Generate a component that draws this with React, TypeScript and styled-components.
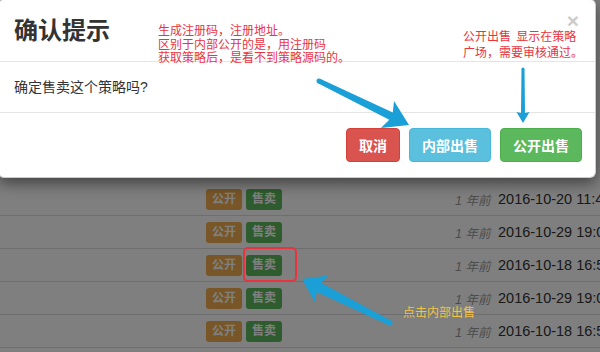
import React from 'react'
import styled, { createGlobalStyle } from 'styled-components'

const GlobalStyle = createGlobalStyle`
  html, body {
    margin: 0;
    padding: 0;
    width: 600px;
    height: 352px;
    overflow: hidden;
    background: #fff;
  }
  body {
    font-family: "Liberation Sans", "Noto Sans CJK SC", sans-serif;
    color: #333;
  }
`

const Screen = styled.div`
  position: relative;
  width: 600px;
  height: 352px;
  overflow: hidden;
`

const Table = styled.div`
  display: flex;
  flex-direction: column;
  padding-top: 183px;
`

const Row = styled.div`
  display: flex;
  align-items: center;
  height: 32px;
  border-bottom: 1px solid #ddd;
  padding-left: 206px;
  white-space: nowrap;
`

const Labels = styled.div`
  display: flex;
  flex-shrink: 0;
  gap: 4px;
  width: 249px;
`

const Label = styled.span<{ $tone: 'warning' | 'success' }>`
  display: inline-block;
  height: 21px;
  line-height: 21px;
  padding: 0 6px;
  border-radius: 3px;
  font-size: 12px;
  font-weight: bold;
  color: #fff;
  background: ${({ $tone }) => ($tone === 'warning' ? '#f0ad4e' : '#5cb85c')};
`

const Ago = styled.span`
  flex-shrink: 0;
  width: 43px;
  font-size: 12.5px;
  font-style: italic;
  color: #999;
`

const DateText = styled.span`
  flex-shrink: 0;
  font-size: 14.5px;
  color: #333;
`

const Backdrop = styled.div`
  position: absolute;
  inset: 0;
  background: rgba(0, 0, 0, 0.5);
`

const Modal = styled.div`
  position: absolute;
  top: -1px;
  left: -2px;
  width: 598px;
  background: #fff;
  border: 1px solid rgba(0, 0, 0, 0.2);
  border-radius: 6px;
  box-shadow: 0 5px 15px rgba(0, 0, 0, 0.5);
  box-sizing: border-box;
`

const ModalHeader = styled.div`
  display: flex;
  align-items: center;
  justify-content: space-between;
  height: 62px;
  padding: 0 15px;
  border-bottom: 1px solid #e5e5e5;
  box-sizing: border-box;
`

const Title = styled.h4`
  margin: 0;
  font-size: 24px;
  line-height: 32px;
  font-weight: bold;
  color: #333;
`

const Close = styled.span`
  align-self: flex-start;
  margin-top: 10px;
  margin-right: 1px;
  font-size: 21px;
  font-weight: bold;
  line-height: 21px;
  color: #000;
  opacity: 0.2;
`

const ModalBody = styled.div`
  padding: 15px;
  font-size: 14px;
  line-height: 20px;
  border-bottom: 1px solid #e5e5e5;
`

const ModalFooter = styled.div`
  display: flex;
  justify-content: flex-end;
  gap: 9px;
  padding: 15px 13px 15px 15px;
`

const tones = {
  danger: ['#d9534f', '#d43f3a'],
  info: ['#5bc0de', '#46b8da'],
  success: ['#5cb85c', '#4cae4c'],
}

const Button = styled.button<{ $tone: keyof typeof tones }>`
  height: 34px;
  padding: 0 12px;
  font-family: inherit;
  font-size: 14px;
  font-weight: bold;
  color: #fff;
  background: ${({ $tone }) => tones[$tone][0]};
  border: 1px solid ${({ $tone }) => tones[$tone][1]};
  border-radius: 4px;
`

const Note = styled.div<{ $x: number; $y: number; $color: string; $size: number; $lh: number }>`
  position: absolute;
  left: ${({ $x }) => $x}px;
  top: ${({ $y }) => $y}px;
  font-size: ${({ $size }) => $size}px;
  line-height: ${({ $lh }) => $lh}px;
  color: ${({ $color }) => $color};
  white-space: nowrap;
  word-spacing: 2px;
`

const HighlightBox = styled.div`
  position: absolute;
  left: 243px;
  top: 247px;
  width: 50px;
  height: 31px;
  border: 2px solid #e8343f;
  border-radius: 5px;
`

const Drawing = styled.svg`
  position: absolute;
  inset: 0;
  pointer-events: none;
`

type Pt = [number, number]

// tapered skitch-style arrow
function arrowPoints(tail: Pt, tip: Pt, tailW: number, neckW: number, headW: number, headLen: number, back: number) {
  const dx = tip[0] - tail[0]
  const dy = tip[1] - tail[1]
  const len = Math.hypot(dx, dy)
  const ux = dx / len
  const uy = dy / len
  const nx = -uy
  const ny = ux
  const neck: Pt = [tip[0] - ux * headLen, tip[1] - uy * headLen]
  const barb: Pt = [neck[0] - ux * back, neck[1] - uy * back]
  const p = (b: Pt, s: number): string => `${(b[0] + nx * s).toFixed(1)},${(b[1] + ny * s).toFixed(1)}`
  return [
    p(tail, tailW / 2),
    p(neck, neckW / 2),
    p(barb, headW / 2),
    `${tip[0]},${tip[1]}`,
    p(barb, -headW / 2),
    p(neck, -neckW / 2),
    p(tail, -tailW / 2),
  ].join(' ')
}

const arrows: { tail: Pt; tip: Pt; tw: number; nw: number; hw: number; hl: number; back: number }[] = [
  { tail: [319, 81], tip: [409, 125], tw: 5, nw: 8, hw: 30, hl: 20, back: 4 },
  { tail: [523, 69], tip: [523, 123], tw: 3, nw: 4, hw: 13, hl: 10, back: 1 },
  { tail: [390, 323], tip: [302, 279], tw: 5, nw: 10, hw: 30, hl: 19, back: 3 },
]

const rows = ['2016-10-20 11:46', '2016-10-29 19:02', '2016-10-18 16:52', '2016-10-29 19:01', '2016-10-18 16:55']

const App: React.FC = () => {
  return (
    <>
      <GlobalStyle />
      <Screen>
        <Table>
          {rows.map((date, i) => (
            <Row key={i}>
              <Labels>
                <Label $tone="warning">公开</Label>
                <Label $tone="success">售卖</Label>
              </Labels>
              <Ago>1 年前</Ago>
              <DateText>{date}</DateText>
            </Row>
          ))}
        </Table>
        <Backdrop />
        <Modal>
          <ModalHeader>
            <Title>确认提示</Title>
            <Close>×</Close>
          </ModalHeader>
          <ModalBody>确定售卖这个策略吗?</ModalBody>
          <ModalFooter>
            <Button $tone="danger">取消</Button>
            <Button $tone="info">内部出售</Button>
            <Button $tone="success">公开出售</Button>
          </ModalFooter>
        </Modal>
        <Note $x={158} $y={25} $color="#e8353f" $size={12} $lh={13.5}>
          生成注册码，注册地址。
          <br />
          区别于内部公开的是，用注册码
          <br />
          获取策略后，是看不到策略源码的。
        </Note>
        <Note $x={463} $y={30} $color="#e8353f" $size={12} $lh={15.5}>
          公开出售 显示在策略
          <br />
          广场，需要审核通过。
        </Note>
        <Note $x={403} $y={305} $color="#f3c24a" $size={12} $lh={16}>
          点击内部出售
        </Note>
        <HighlightBox />
        <Drawing width="600" height="352" viewBox="0 0 600 352">
          {arrows.map((a, i) => (
            <g key={i} fill="#1a9fd6">
              <polygon points={arrowPoints(a.tail, a.tip, a.tw, a.nw, a.hw, a.hl, a.back)} />
              <circle cx={a.tail[0]} cy={a.tail[1]} r={a.tw / 2} />
            </g>
          ))}
        </Drawing>
      </Screen>
    </>
  )
}

export default App
